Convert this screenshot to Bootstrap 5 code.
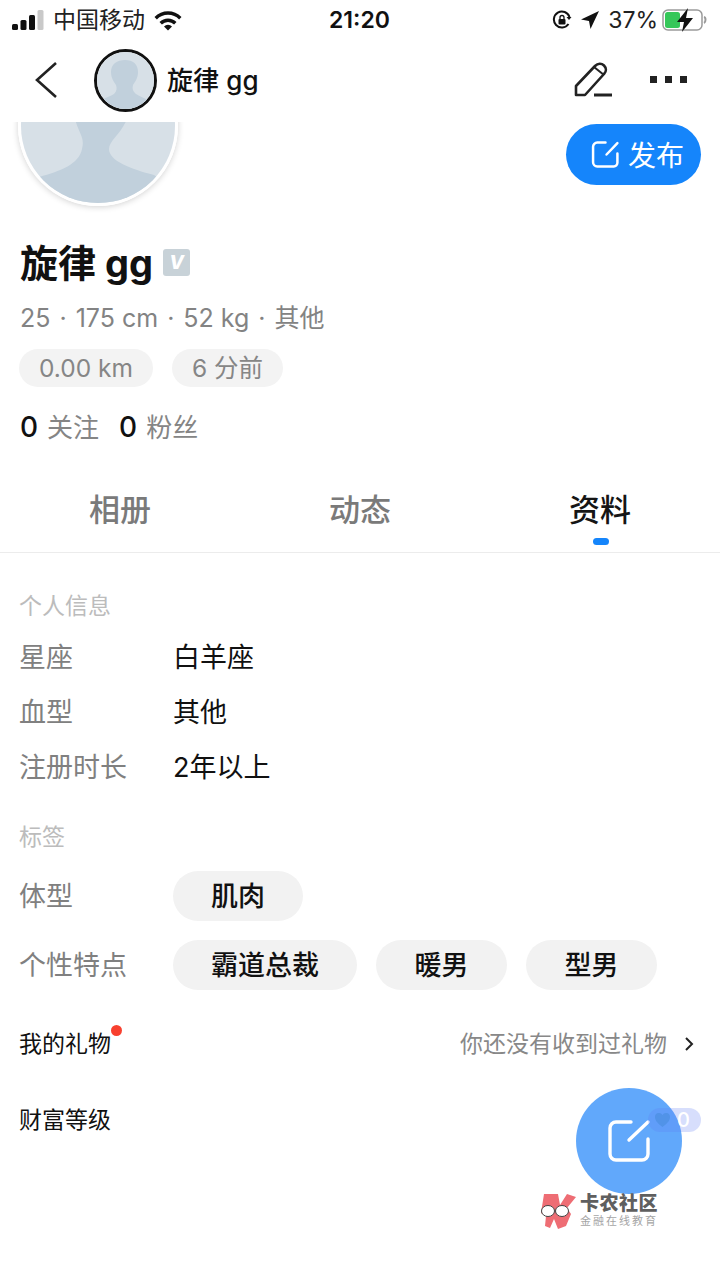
<!doctype html>
<html lang="zh"><head><meta charset="utf-8">
<link href="https://cdn.jsdelivr.net/npm/bootstrap@5.3.0/dist/css/bootstrap.min.css" rel="stylesheet">
<style>
html,body{width:720px;height:1280px;overflow:hidden}
body{font-family:Inter,"Noto Sans CJK SC",sans-serif;color:#111;background:#fff;position:relative}
.st-bar{height:40px;padding:0 12px;font-size:23px;line-height:40px}
.st-time{font-weight:600;font-size:23px;position:absolute;left:329px;top:0}
.top-nav{height:82px;padding-left:34px;padding-right:33px;padding-bottom:2px}
.nav-ava{width:63px;height:63px;border:3px solid #111;border-radius:50%;margin-left:36px;margin-right:10px;overflow:hidden}
.nav-name{font-size:26px;font-weight:500;letter-spacing:.1px}
.big-ava{width:160px;height:160px;border-radius:50%;border:3px solid #fff;box-shadow:0 1px 6px rgba(0,0,0,.18);margin-top:-76px;overflow:hidden;flex:none}
.hero-wrap{overflow:hidden;height:112px;padding:0 19px 0 30px;margin-left:-12px}
.pub{width:135px;height:61px;background:#1585fb;color:#fff;border-radius:31px;font-size:28px;margin-top:2px;gap:8px;border:0;padding:0 0 0 8px}
.pub:hover{background:#1585fb;color:#fff}
.pub span{padding-top:3px}
.name-line{padding:0 20px;margin-top:-1px;height:60px;font-size:38px;font-weight:700;line-height:60px;gap:10px}
.vbadge{width:27px;height:27px;border-radius:3px;background:#c8d2d8;color:#fff;font-size:19px;font-weight:800;font-style:italic;line-height:27px;text-align:center;margin-top:-2px}
.meta{padding:0 20px;margin-top:7px;font-size:25px;line-height:36px;color:#838383;white-space:pre}
.sep-dot{margin:0 9px}
.chips{padding:0 19px;margin-top:13px;gap:19px}
.chip1{height:38px;background:#f3f3f3;border-radius:19px;font-size:24.500px;line-height:38px;color:#868686;padding:0 20px;white-space:pre}
.follow{padding:0 20px;margin-top:21px;font-size:26px;line-height:38px;color:#858585;gap:20px}
.follow b{color:#111;font-weight:500;font-size:28px;margin-right:9px}
.tabs-bar{margin-top:39px;height:67px;border-bottom:1px solid #ececec;position:relative;padding-top:2px}
.tab-it{flex:1 0 0;text-align:center;font-size:31px;font-weight:500;line-height:44px;color:#7a7a7a}
.tab-it.on{color:#151515}
.tab-ind{position:absolute;left:593px;top:52px;width:16px;height:7px;border-radius:3.500px;background:#1585fb}
.sect{padding:0 20px}
.sect-h{font-size:23px;line-height:34px;color:#bcbcbc;margin-left:-1px}
.kv{height:55px;font-size:27px;line-height:57px}
.kv .lbl{width:154px;margin-left:-1px;color:#808080;flex:none}
.tagrow{font-size:27px}
.tagrow .lbl{width:154px;margin-left:-1px;margin-top:2px;color:#808080;flex:none}
.tagp{height:50px;line-height:52px;border-radius:25px;background:#f2f2f2;font-weight:500;text-align:center;color:#111}
.gift{padding:0 20px 0 19px;font-size:23px;line-height:36px;position:relative}
.gift-r{color:#888}
.dot-red{position:absolute;left:92px;top:-1px;width:11px;height:11px;border-radius:50%;background:#f8402f}
.chev{margin-left:16px;margin-right:5px}
.lvl-pill{position:absolute;left:648px;top:1108px;width:53px;height:24px;border-radius:12px;background:rgba(95,125,245,.25);color:#fff;font-size:20px;line-height:24px;text-align:right;padding-right:11px;font-weight:500}
.fab{position:absolute;left:576px;top:1088px;width:106px;height:106px;border-radius:50%;background:rgba(80,158,251,.9);display:flex;align-items:center;justify-content:center}
.heart{position:absolute;left:654px;top:1112px}
.wm{position:absolute;left:540px;top:1192px;width:122px;height:38px}
.wm-logo{position:absolute;left:0;top:1px}
.wm-a,.wm-b{position:absolute;left:40px;white-space:nowrap;font-family:"Liberation Sans","Noto Sans CJK SC",sans-serif}
.wm-a{top:1px;font-size:19px;line-height:21px;font-weight:800;color:#5f5f5f;letter-spacing:.5px}
.wm-b{top:23px;font-size:11px;line-height:12px;color:#a5a5a5;letter-spacing:2px}
</style></head>
<body>
<div class="st-bar d-flex align-items-center">
  <svg width="33" height="20" viewBox="0 0 33 20"><rect x="0" y="14" width="6" height="6" rx="1.5" fill="#111"/><rect x="8.5" y="10" width="6" height="10" rx="1.5" fill="#111"/><rect x="17" y="5" width="6" height="15" rx="1.5" fill="#111"/><rect x="25.5" y="0" width="6" height="20" rx="1.5" fill="#c9c9c9"/></svg>
  <span class="ms-2" style="color:#222">中国移动</span>
  <svg class="ms-2" width="30" height="22" viewBox="0 0 30 22"><path d="M1.500 8a19 19 0 0 1 27 0l-2.400 2.500a15.600 15.600 0 0 0-22.200 0z M6.500 13a12 12 0 0 1 17 0l-2.400 2.500a8.600 8.600 0 0 0-12.200 0z M11 17.500a5.600 5.600 0 0 1 8 0L15 21.500z" fill="#111"/></svg>
  <span class="st-time">21:20</span>
  <div class="ms-auto d-flex align-items-center">
    <svg width="20" height="20" viewBox="0 0 20 20" fill="none"><path d="M16.500 14A8 8 0 1 1 17.500 7" stroke="#111" stroke-width="2"/><path d="M14.500 7h5l-2.500 3z" fill="#111"/><rect x="6.500" y="9" width="7" height="5.500" rx="1" fill="#111"/><path d="M8 9V7.500a2 2 0 0 1 4 0V9" stroke="#111" stroke-width="1.300"/></svg>
    <svg class="ms-2" width="20" height="20" viewBox="0 0 20 20"><path d="M19 1 10.500 19 9 11 1 9.500z" fill="#111"/></svg>
    <span class="ms-2" style="color:#222">37%</span>
    <svg class="ms-1" width="46" height="24" viewBox="0 0 46 24" fill="none"><rect x="1" y="2" width="39" height="20" rx="5" stroke="#9a9a9a" stroke-width="1.500"/><rect x="3" y="4" width="15" height="16" rx="2.500" fill="#35c759"/><path d="M42 9c2 .5 2 5 0 6" stroke="#9a9a9a" stroke-width="2"/><path d="M26 0 15 14h7l-2 10 11-14h-7z" fill="#111"/></svg>
  </div>
</div>

<div class="top-nav d-flex align-items-center">
  <svg width="24" height="38" viewBox="0 0 24 38" fill="none"><path d="M22 2 3 19l19 17" stroke="#222" stroke-width="2.600"/></svg>
  <div class="nav-ava">
    <svg width="57" height="57" viewBox="0 0 57 57"><rect width="57" height="57" fill="#d7e0e7"/><path d="M28 8c8 0 13 4 13 12 0 6-3 10-5 13-1 4 0 6 3 9 3 2 8 4 12 6v9H4v-9c4-2 10-4 13-6 3-3 3-6 2-9-2-3-5-7-5-13 0-8 6-12 14-12z" fill="#c1d0dc"/></svg>
  </div>
  <span class="nav-name">旋律 gg</span>
  <div class="ms-auto d-flex align-items-center" style="gap:38px">
    <svg width="38" height="36" viewBox="0 0 38 36" fill="none"><path d="M2 33V24L21 4c3-3 6.500-3 9-.5s2.500 6 0 8.500L11 33z" stroke="#222" stroke-width="2.600" stroke-linejoin="round"/><path d="M20 5l10 8" stroke="#222" stroke-width="2"/><path d="M20 33h18" stroke="#222" stroke-width="3"/></svg>
    <svg width="37" height="8" viewBox="0 0 37 8" fill="#222"><rect width="7" height="7"/><rect x="15" width="7" height="7"/><rect x="30" width="7" height="7"/></svg>
  </div>
</div>

<div class="hero-wrap">
  <div class="d-flex justify-content-between align-items-start">
    <div class="big-ava">
      <svg width="154" height="154" viewBox="0 0 154 154"><rect width="154" height="154" fill="#d7e0e7"/><path d="M54 70C58 85 64 88 61 100 58 115 40 122 18 128L0 140V154H154V140L133 126C110 120 88 112 88 100 88 92 100 85 106 70Z" fill="#c1d0dc"/></svg>
    </div>
    <button class="pub btn d-flex align-items-center justify-content-center">
      <svg width="29" height="29" viewBox="0 0 28 28" fill="none" stroke="#fff" stroke-width="2.400" stroke-linecap="round"><path d="M14 2.500H6a4 4 0 0 0-4 4v15a4 4 0 0 0 4 4h16a3.500 3.500 0 0 0 3.500-3.500V13"/><path d="M25.500 3 15 14"/></svg>
      <span>发布</span>
    </button>
  </div>
</div>

<div class="name-line d-flex align-items-center"><span>旋律 gg</span><span class="vbadge">V</span></div>
<div class="meta">25<span class="sep-dot">·</span>175 cm<span class="sep-dot">·</span>52 kg<span class="sep-dot">·</span>其他</div>
<div class="chips d-flex"><span class="chip1">0.00 km</span><span class="chip1">6 分前</span></div>
<div class="follow d-flex"><span><b>0</b>关注</span><span><b>0</b>粉丝</span></div>

<div class="tabs-bar d-flex">
  <div class="tab-it">相册</div><div class="tab-it">动态</div><div class="tab-it on">资料</div>
  <span class="tab-ind"></span>
</div>

<div class="sect" style="margin-top:36px">
  <div class="sect-h">个人信息</div>
  <div class="kv d-flex" style="margin-top:6px"><span class="lbl">星座</span><span>白羊座</span></div>
  <div class="kv d-flex"><span class="lbl">血型</span><span>其他</span></div>
  <div class="kv d-flex"><span class="lbl">注册时长</span><span>2年以上</span></div>
  <div class="sect-h" style="margin-top:26px">标签</div>
  <div class="tagrow d-flex align-items-center" style="margin-top:17px"><span class="lbl">体型</span><span class="tagp" style="width:130px">肌肉</span></div>
  <div class="tagrow d-flex align-items-center" style="margin-top:19px"><span class="lbl">个性特点</span><span class="tagp" style="width:184px">霸道总裁</span><span class="tagp" style="width:131px;margin-left:19px">暖男</span><span class="tagp" style="width:131px;margin-left:19px">型男</span></div>
</div>

<div class="gift d-flex align-items-center justify-content-between" style="margin-top:36px"><span class="position-relative">我的礼物<span class="dot-red"></span></span>
  <span class="d-flex align-items-center"><span class="gift-r">你还没有收到过礼物</span><svg class="chev" width="12" height="16" viewBox="0 0 12 16" fill="none"><path d="M3 2l6 6-6 6" stroke="#222" stroke-width="2"/></svg></span></div>
<div class="gift" style="margin-top:40px">财富等级</div>

<div class="fab">
  <svg width="44" height="44" viewBox="0 0 44 44" fill="none" stroke="#fff" stroke-width="3.400" stroke-linecap="round"><path d="M24 3H9a6 6 0 0 0-6 6v26a6 6 0 0 0 6 6h26a6 6 0 0 0 6-6V20"/><path d="M41 3 22 21"/></svg>
</div>
<div class="lvl-pill">0</div>
<svg class="heart" width="17" height="16" viewBox="0 0 17 16"><path d="M8.500 15C3 11 1 8 1 5a4 4 0 0 1 7.500-2A4 4 0 0 1 16 5c0 3-2 6-7.500 10z" fill="#5193e8"/></svg>
<div class="wm">
  <svg class="wm-logo" width="37" height="36" viewBox="0 0 37 36"><path d="M4 1H18L20 12 27 1 36 4 27 15 31 21 26 33 18 36 14 26 10 35 5 33 6 23 1 20Z" fill="#ee6d74"/><ellipse cx="8" cy="18" rx="6.500" ry="5.500" fill="#fff" stroke="#444" stroke-width="1"/><ellipse cx="22" cy="18" rx="6.500" ry="5.500" fill="#fff" stroke="#444" stroke-width="1"/></svg>
  <span class="wm-a">卡农社区</span>
  <span class="wm-b">金融在线教育</span>
</div>
</body></html>
